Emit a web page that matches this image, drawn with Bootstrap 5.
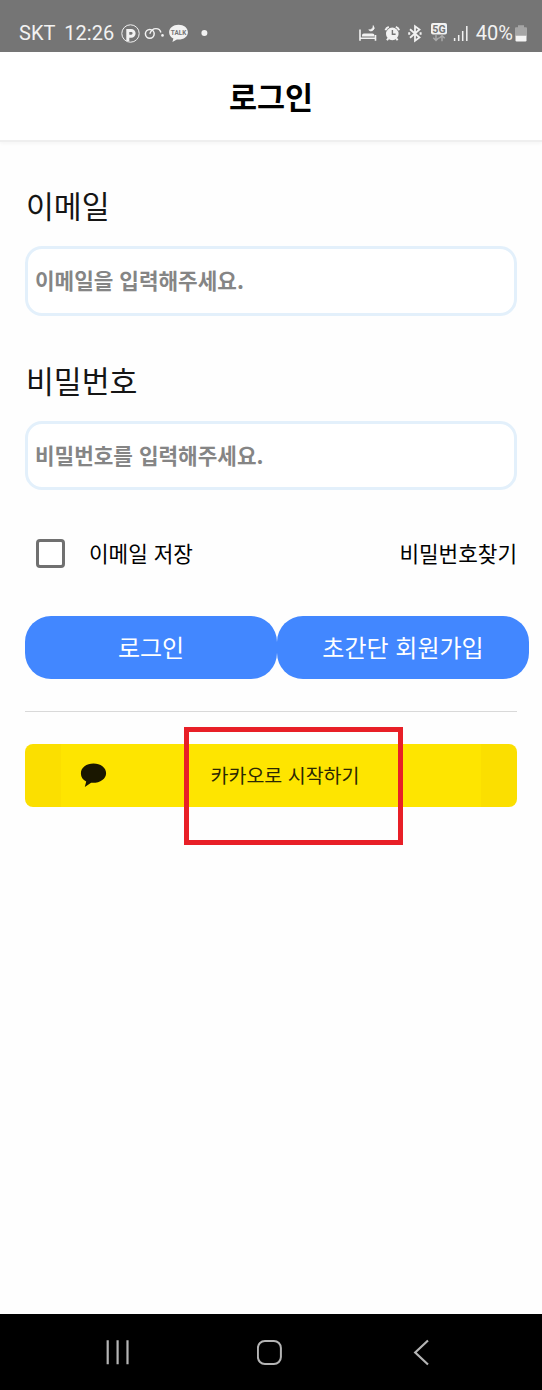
<!DOCTYPE html>
<html lang="ko">
<head>
<meta charset="utf-8">
<meta name="viewport" content="width=device-width, initial-scale=1">
<title>로그인</title>
<link rel="stylesheet" href="https://cdn.jsdelivr.net/npm/bootstrap@5.3.0/dist/css/bootstrap.min.css">
<style>
  body { font-family: "Noto Sans CJK KR", sans-serif; background: #fefefe; color: #000; }
  .status-bar { height: 52px; padding: 15px 14px 0 19px; background: #757575; color: #f2f2f2; font: 20px/37px Roboto, sans-serif; }
  .status-bar svg { display: block; margin-bottom: 2px; }
  .app-header { height: 88px; background: #fff; box-shadow: 0 2px 0 #efefef, 0 4px 3px rgba(0,0,0,.03); }
  .app-header h1 { font-size: 30.5px; font-weight: 700; line-height: 40px; }
  .login-form { padding: 43px 25px 0; }
  .field-label { display: block; font-size: 30.3px; line-height: 44px; color: #151515; margin: 0 0 19px 1px; }
  .login-form .form-control { height: 70px; border: 3px solid #e3f0fb; border-radius: 17px; padding: 0 7px 4px; font-size: 21.3px; font-weight: 700; background: #fff; }
  .login-form #password { height: 69px; padding-bottom: 3px; }
  .login-form .form-control::placeholder { color: #858585; opacity: 1; }
  .field-gap { margin-top: 42px; }
  .options { height: 40px; margin-top: 43px; padding-left: 11px; font-size: 21.3px; line-height: 38px; }
  .options .form-check-input { width: 29px; height: 29px; border: 3px solid #707070; border-radius: 4px; margin: 0 24px 0 0; }
  .actions { margin: 43px -12px 0 0; }
  .actions .btn { width: 252px; height: 63px; border: 0; border-radius: 26px; background: #4287ff; color: #fff; font-size: 24px; padding: 0 0 1px; }
  .divider { height: 1px; background: #d9d9d9; margin: 32px 0; }
  .kakao { height: 63px; border: 0; border-radius: 8px; padding: 0 0 1px; color: #2b2703; font-size: 19.5px;
    background: linear-gradient(90deg, #fbdf00 36px, #fee500 36px, #fee500 456px, #fbdf00 456px); }
  .kakao svg { position: absolute; left: 55px; top: 18px; }
  .highlight { position: absolute; left: 159px; top: -17px; width: 219px; height: 118px; border: 5px solid #e81f27; pointer-events: none; }
  .nav-keys { height: 76px; background: #000; padding: 0 106px 0 100px; }
</style>
</head>
<body>
<div class="d-flex flex-column vh-100 overflow-hidden">
  <div class="status-bar d-flex align-items-center flex-shrink-0">
    <span>SKT</span><span style="margin-left:9px">12:26</span>
    <svg width="96" height="26" viewBox="118.5 20 96 26" style="margin-left:4px" fill="none" stroke="#f2f2f2">
      <circle cx="131" cy="33.5" r="8.7" stroke-width="1"/>
      <path d="M128.3 41V30.4H131.7a2.9 2.9 0 0 1 0 5.8h-3" stroke-width="3"/>
      <circle cx="150.3" cy="33.8" r="4.4" stroke-width="1.5"/>
      <path d="M150.3 33.8c1-3 3.4-5.2 6.2-5.2 2.7 0 4.3 1.5 4.9 3.9" stroke-width="1.4"/>
      <circle cx="163" cy="35.4" r="1.3" fill="#f2f2f2" stroke="none"/>
      <path d="M179 24.7c-5.3 0-9.4 3.3-9.4 7.5 0 2.8 1.7 5 4.3 6.4l-1 3.3 4.5-2.4c6.3.6 11-2.8 11-7.3s-4.1-7.5-9.4-7.5z" fill="#f2f2f2" stroke="none"/>
      <text x="179" y="34.8" text-anchor="middle" font-family="Roboto" font-size="6.4" font-weight="700" fill="#757575" stroke="none">TALK</text>
      <circle cx="204.9" cy="33" r="3" fill="#f2f2f2" stroke="none"/>
    </svg>
    <svg class="ms-auto" width="113" height="26" viewBox="358 20 113 26" fill="none" stroke="#f2f2f2">
      <path d="M360 29.5v11.2M375.5 35v5.7M360 38.2h15.5" stroke-width="1.6"/>
      <path d="M362 36.4v-1q0-1.8 1.8-1.8h8.4q2.4 0 2.4 2.4v.4z" fill="#f2f2f2" stroke="none"/>
      <path d="M373.2 25.5q2.6 3.4-.8 5.2-2 1-3.7-.9 4.2.3 4.5-4.3z" fill="#f2f2f2" stroke-width=".6"/>
      <circle cx="392.3" cy="33.9" r="6.3" fill="#f2f2f2" stroke="none"/>
      <path d="M385.5 30.2q.7-2.5 3.3-3.3M399.1 30.2q-.7-2.5-3.3-3.3" stroke-width="2"/>
      <path d="M388.4 38.2l-1.4 2.1M396.2 38.2l1.4 2.1" stroke-width="2"/>
      <path d="M392.4 30v4.3h3.2" stroke="#757575" stroke-width="1.4"/>
      <path d="M410 29.2l9.5 8.3-4.5 3.3V26.2l4.5 3.3-9.5 8.3" stroke-width="1.8"/>
      <path d="M409.2 32.2v2.6M420.6 32.2v2.6" stroke-width="2"/>
      <rect x="431" y="23" width="16" height="11.5" rx="2" fill="#f2f2f2" stroke="none"/>
      <text x="439" y="32.5" text-anchor="middle" font-family="Roboto" font-size="10.6" font-weight="700" fill="#757575" stroke="none">5G</text>
      <path d="M436 34.5v5.8M433.3 37.8l2.7 2.7 2.7-2.7M442 41.2v-5.6M439.3 38.2l2.7-2.7 2.7 2.7" stroke="#aaa" stroke-width="1.4"/>
      <path d="M454.6 38v3M458.7 35v6M462.7 31v10M466.8 26v15" stroke-width="1.5"/>
    </svg>
    <span style="margin-left:5px">40%</span>
    <svg width="12" height="20" viewBox="515.5 23 12 20" style="margin-left:2px;margin-right:1px">
      <path d="M518.5 25.2h6v2h2q1 0 1 1v8h-12v-8q0-1 1-1h2z" fill="#a5a5a5"/>
      <path d="M516 35.7h11v4.5q0 1.2-1.2 1.2h-8.6q-1.2 0-1.2-1.2z" fill="#f5f5f5"/>
    </svg>
  </div>

  <header class="app-header d-flex align-items-center justify-content-center flex-shrink-0">
    <h1 class="m-0">로그인</h1>
  </header>

  <main class="flex-grow-1">
    <form class="login-form">
      <label class="field-label" for="email">이메일</label>
      <input class="form-control" id="email" type="email" placeholder="이메일을 입력해주세요.">
      <label class="field-label field-gap" for="password">비밀번호</label>
      <input class="form-control" id="password" type="password" placeholder="비밀번호를 입력해주세요.">

      <div class="options d-flex align-items-center">
        <input class="form-check-input" id="save" type="checkbox">
        <label for="save">이메일 저장</label>
        <span class="ms-auto">비밀번호찾기</span>
      </div>

      <div class="actions d-flex">
        <button type="button" class="btn">로그인</button>
        <button type="button" class="btn">초간단 회원가입</button>
      </div>

      <div class="divider"></div>

      <div class="position-relative">
        <button type="button" class="btn kakao w-100 d-flex align-items-center justify-content-center">
          <svg width="28" height="28" viewBox="80 762 28 28"><path d="M93.5 763.5c-7 0-12.6 4.2-12.6 9.7 0 3.8 1.9 6.5 5.3 8.2l-1.4 5.6 6.3-4.2c8.7.6 15-3.8 15-9.6 0-5.5-5.6-9.7-12.6-9.7z" fill="#1a1700"/></svg>
          <span class="ps-4 ms-1">카카오로 시작하기</span>
        </button>
        <div class="highlight"></div>
      </div>
    </form>
  </main>

  <nav class="nav-keys d-flex align-items-center justify-content-between flex-shrink-0">
    <svg width="34" height="28" viewBox="0 0 34 28" stroke="#b4b4b4" stroke-width="2.2"><path d="M7.7 2.2v24M17.6 2.2v24M27.5 2.2v24"/></svg>
    <svg width="28" height="28" viewBox="2 0 28 28" fill="none" stroke="#b4b4b4" stroke-width="2"><rect x="2.9" y="3" width="23" height="23" rx="7"/></svg>
    <svg width="28" height="28" viewBox="0 0 28 28" fill="none" stroke="#b4b4b4" stroke-width="2.2"><path d="M20 2.5L7.2 14.5 20 26.5"/></svg>
  </nav>
</div>
<script src="https://cdn.jsdelivr.net/npm/bootstrap@5.3.0/dist/js/bootstrap.bundle.min.js"></script>
</body>
</html>
